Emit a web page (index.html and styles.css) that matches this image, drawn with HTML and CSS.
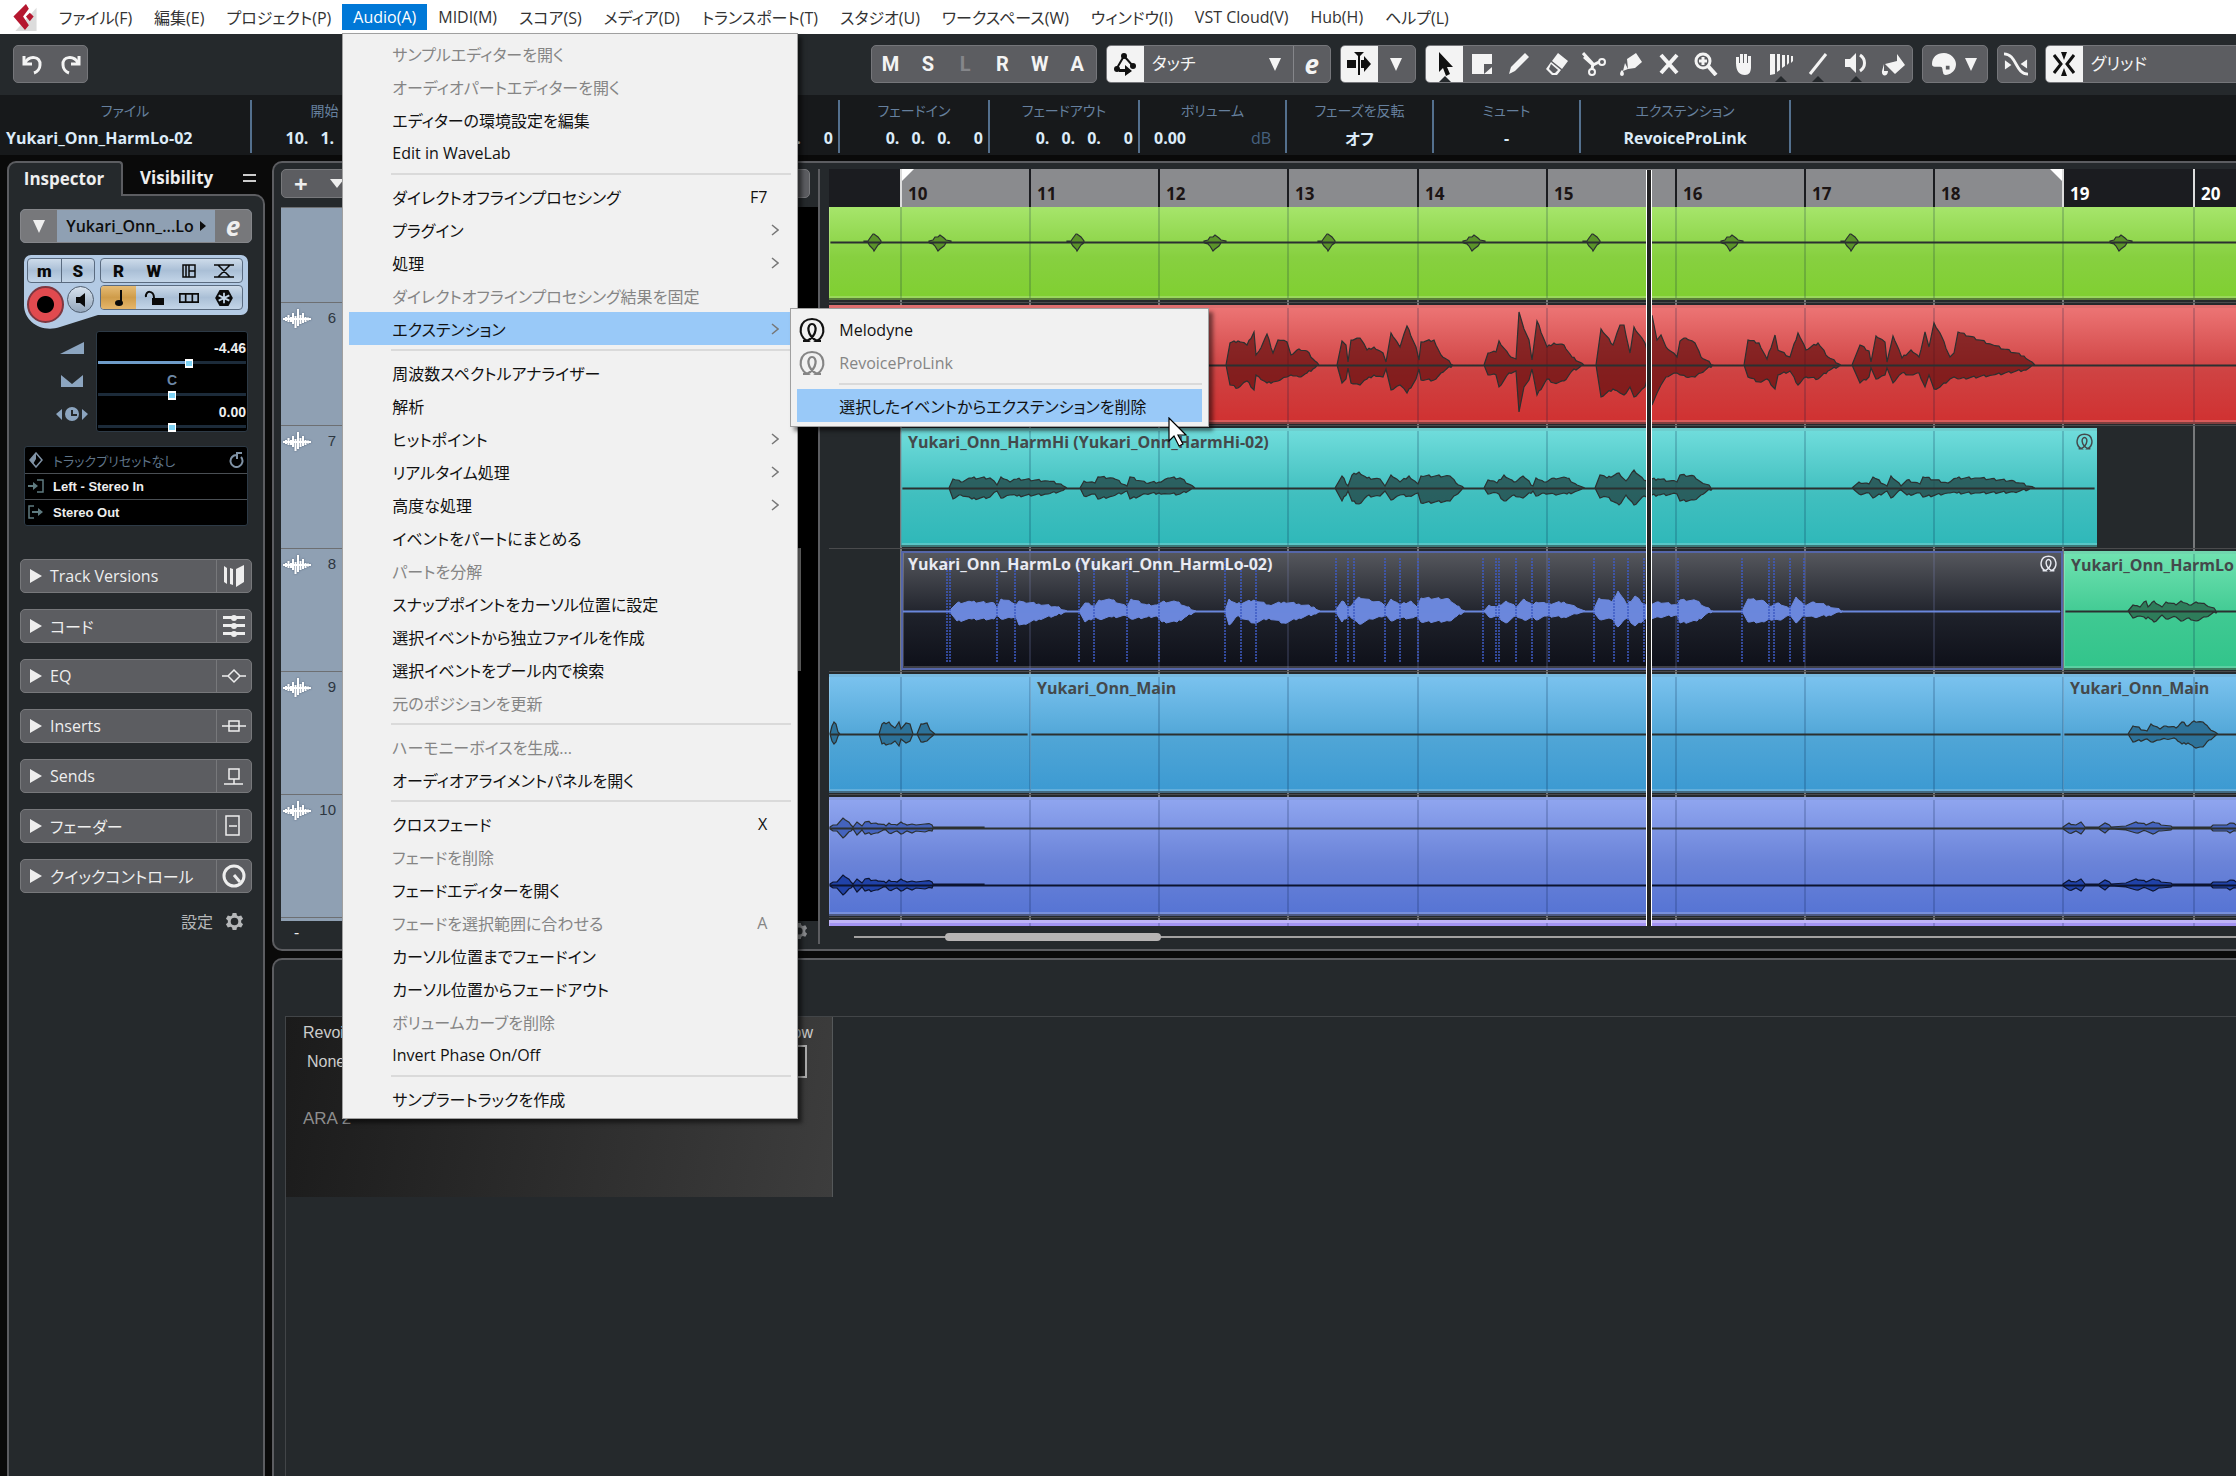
FILE: index.html
```html
<!DOCTYPE html>
<html lang="ja">

<head>
    <meta charset="UTF-8">
    <meta name="viewport" content="width=device-width, initial-scale=1.0">
    <title>Cubase - Yukari_Onn</title>
    <link rel="stylesheet" href="styles.css">
</head>

<body>
    <!-- Shared icons -->
    <svg class="sprite" aria-hidden="true">
        <symbol id="i-down" viewBox="0 0 12 16"><path d="M0 2h12L6 15z"/></symbol>
        <symbol id="i-right" viewBox="0 0 12 14"><path d="M0 0l12 7-12 7z"/></symbol>
        <symbol id="i-chevron" viewBox="0 0 8 12"><path d="M1 1l6 5-6 5" fill="none" stroke="currentColor" stroke-width="1.5"/></symbol>
        <symbol id="i-wave" viewBox="0 0 28 20"><path d="M0 10h28M3 8v4M5.500 6v7M8 8v5M10 4v11M12.500 7v12M15 0v17M17.500 6v9M20 4v10M22.500 8v5M25 8.500v3" fill="none" stroke="currentColor" stroke-width="2"/></symbol>
        <symbol id="i-ara" viewBox="0 0 26 26"><path d="M4 24h4C-2 18 0 2 13 2s15 16 5 22h4M8 24C19 18 18 7 13 7S7 18 18 24" fill="none" stroke="currentColor" stroke-width="2.2"/></symbol>
        <symbol id="i-gear" viewBox="0 0 20 20"><path fill-rule="evenodd" d="M8 1h4l.6 2.6 1.6.9L17 3.600l2 3.400-2 2v2l2 2-2 3.400-2.800-.9-1.600.9L12 19H8l-.6-2.600-1.600-.9L3 16.400 1 13l2-2V9L1 7l2-3.400 2.800.9 1.600-.9zM10 6a4 4 0 100 8 4 4 0 000-8z"/></symbol>
    </svg>

    <!-- Menu bar -->
    <nav class="menubar">
        <svg class="logo" viewBox="0 0 24 28"><path d="M24 4v24H2z" fill="#dcdcdc"/><path d="M13 0L0 13l12 14 4-5-6-9 6-8z" fill="#b5172f"/><path d="M17 9l4 4-4 5-4-5z" fill="#b5172f"/></svg>
        <button>ファイル(F)</button>
        <button>編集(E)</button>
        <button>プロジェクト(P)</button>
        <div class="menu-holder">
            <button class="open">Audio(A)</button>
            <ul class="menu audio-menu">
                <li><button disabled>サンプルエディターを開く</button></li>
                <li><button disabled>オーディオパートエディターを開く</button></li>
                <li><button>エディターの環境設定を編集</button></li>
                <li><button>Edit in WaveLab</button></li>
                <li class="sep"></li>
                <li><button>ダイレクトオフラインプロセシング<kbd>F7</kbd></button></li>
                <li><button>プラグイン<svg class="chev"><use href="#i-chevron"/></svg></button></li>
                <li><button>処理<svg class="chev"><use href="#i-chevron"/></svg></button></li>
                <li><button disabled>ダイレクトオフラインプロセシング結果を固定</button></li>
                <li>
                    <button class="active">エクステンション<svg class="chev"><use href="#i-chevron"/></svg></button>
                    <ul class="menu submenu">
                        <li><button><svg class="ara"><use href="#i-ara"/></svg>Melodyne</button></li>
                        <li><button disabled><svg class="ara"><use href="#i-ara"/></svg>RevoiceProLink</button></li>
                        <li class="sep"></li>
                        <li><button class="active">選択したイベントからエクステンションを削除</button></li>
                    </ul>
                    <svg class="cursor" viewBox="0 0 20 30"><path d="M1 1v23l5-5 5 10 4-2-5-9h8z" fill="#fff" stroke="#000" stroke-width="1.2"/></svg>
                </li>
                <li class="sep"></li>
                <li><button>周波数スペクトルアナライザー</button></li>
                <li><button>解析</button></li>
                <li><button>ヒットポイント<svg class="chev"><use href="#i-chevron"/></svg></button></li>
                <li><button>リアルタイム処理<svg class="chev"><use href="#i-chevron"/></svg></button></li>
                <li><button>高度な処理<svg class="chev"><use href="#i-chevron"/></svg></button></li>
                <li><button>イベントをパートにまとめる</button></li>
                <li><button disabled>パートを分解</button></li>
                <li><button>スナップポイントをカーソル位置に設定</button></li>
                <li><button>選択イベントから独立ファイルを作成</button></li>
                <li><button>選択イベントをプール内で検索</button></li>
                <li><button disabled>元のポジションを更新</button></li>
                <li class="sep"></li>
                <li><button disabled>ハーモニーボイスを生成...</button></li>
                <li><button>オーディオアライメントパネルを開く</button></li>
                <li class="sep"></li>
                <li><button>クロスフェード<kbd>X</kbd></button></li>
                <li><button disabled>フェードを削除</button></li>
                <li><button>フェードエディターを開く</button></li>
                <li><button disabled>フェードを選択範囲に合わせる<kbd>A</kbd></button></li>
                <li><button>カーソル位置までフェードイン</button></li>
                <li><button>カーソル位置からフェードアウト</button></li>
                <li><button disabled>ボリュームカーブを削除</button></li>
                <li><button>Invert Phase On/Off</button></li>
                <li class="sep"></li>
                <li><button>サンプラートラックを作成</button></li>
            </ul>
        </div>
        <button>MIDI(M)</button>
        <button>スコア(S)</button>
        <button>メディア(D)</button>
        <button>トランスポート(T)</button>
        <button>スタジオ(U)</button>
        <button>ワークスペース(W)</button>
        <button>ウィンドウ(I)</button>
        <button>VST Cloud(V)</button>
        <button>Hub(H)</button>
        <button>ヘルプ(L)</button>
    </nav>

    <!-- Toolbar -->
    <div class="toolbar">
        <div class="group undo">
            <button aria-label="Undo"><svg viewBox="0 0 24 24"><path d="M3 4v8h8" class="ln"/><path d="M4 11C8 3 20 4 19 13c0 4-3 7-6 8" class="ln"/></svg></button>
            <button aria-label="Redo"><svg viewBox="0 0 24 24"><path d="M21 4v8h-8" class="ln"/><path d="M20 11C16 3 4 4 5 13c0 4 3 7 6 8" class="ln"/></svg></button>
        </div>
        <div class="spacer"></div>
        <div class="group states">
            <button>M</button><button>S</button><button class="dim">L</button><button>R</button><button>W</button><button>A</button>
        </div>
        <div class="group">
            <button class="on" aria-label="Automation"><svg viewBox="0 0 24 24"><path d="M4 16L11 4l9 10" fill="none" stroke="#111" stroke-width="2"/><circle cx="11" cy="4" r="3"/><circle cx="4" cy="17" r="3"/><circle cx="20" cy="14" r="3"/><path d="M6 17h6v-4l7 6-7 5v-4H6z"/></svg></button>
            <label class="pick touch"><select aria-label="Automation mode"><option>タッチ</option></select><svg class="tri"><use href="#i-down"/></svg></label>
            <button class="edge e" aria-label="Automation panel">e</button>
        </div>
        <div class="group">
            <button class="on" aria-label="Auto-scroll"><svg viewBox="0 0 24 24"><path d="M7 0h10l-5 5zM11 3h2v20h-2zM0 8h9v8H0zM14 8h3V4l7 8-7 8v-4h-3z"/></svg></button>
            <button aria-label="Auto-scroll settings"><svg class="tri"><use href="#i-down"/></svg></button>
        </div>
        <div class="group tools">
            <button class="on notch" aria-label="Select"><svg viewBox="0 0 24 24"><path d="M6 0v20l4-4 3 8 4-2-3-7h6z"/></svg></button>
            <button aria-label="Range"><svg viewBox="0 0 24 24"><path d="M2 2h20v10h-8v10H2zM22 15v7h-8z"/></svg></button>
            <button aria-label="Draw"><svg viewBox="0 0 24 24"><path d="M2 22l2-7L18 1l4 4L8 19z"/></svg></button>
            <button aria-label="Erase"><svg viewBox="0 0 24 24"><path d="M13 1l10 8-6 8-10-8zM6 10l10 8-4 5H7l-6-6z"/><path d="M6 12l7 6-3 3H8l-4-4z" fill="#5c5d61"/></svg></button>
            <button aria-label="Split"><svg viewBox="0 0 24 24"><path d="M1 1l10 11M2 5l9 8 6-3M11 12l-1 5" class="ln"/><circle cx="20" cy="10" r="3" class="ln thin"/><circle cx="10" cy="20" r="3" class="ln thin"/></svg></button>
            <button aria-label="Glue"><svg viewBox="0 0 24 24"><path d="M8 7l9-6 6 9-7 6-7 1zM6 11l3 6-5 2zM3 18c3 3 2 6 0 6s-3-3 0-6z"/></svg></button>
            <button aria-label="Mute"><svg viewBox="0 0 24 24"><path d="M4 3l16 18M20 3L4 21" fill="none" stroke="currentColor" stroke-width="4"/></svg></button>
            <button aria-label="Zoom"><svg viewBox="0 0 24 24"><circle cx="9" cy="9" r="7" class="ln"/><path d="M9 5v8M5 9h8" class="ln"/><path d="M14 14l8 9" fill="none" stroke="currentColor" stroke-width="4"/></svg></button>
            <button aria-label="Comp"><svg viewBox="0 0 24 24"><path d="M4 11V5h3v6h1V2h3v9h1V2h3v9h1V4h3v11c0 5-2 8-6 8-6 0-9-4-9-12z"/></svg></button>
            <button class="notch" aria-label="Warp"><svg viewBox="0 0 24 24"><path d="M1 2h5v20l-5 1zM8 2h3v16l-3 2zM13 3h3v11l-3 2zM18 3h2v8l-2 2zM22 4h2v5l-2 2z"/></svg></button>
            <button class="notch" aria-label="Line"><svg viewBox="0 0 24 24"><path d="M4 22L20 2" fill="none" stroke="currentColor" stroke-width="3"/></svg></button>
            <button class="notch" aria-label="Play"><svg viewBox="0 0 24 24"><path d="M1 7h5l6-6v20l-6-6H1z"/><path d="M16 3c6 4 6 12 0 16" class="ln"/></svg></button>
            <button aria-label="Color"><svg viewBox="0 0 24 24"><path d="M4 12l12-3V2l8 11-10 9zM3 12v7h4c0 6-7 6-6 0z"/></svg></button>
        </div>
        <div class="group palette">
            <button aria-label="Color palette"><svg viewBox="0 0 26 26"><path fill-rule="evenodd" d="M13 1C5 1 0 6 0 13c0 2 1 3 3 3h6c3 0 2 4 3 6 0 2 1 3 3 3 7-1 11-6 11-12S20 1 13 1zM15 15h4v4h-4z"/></svg><svg class="tri"><use href="#i-down"/></svg></button>
        </div>
        <div class="group">
            <button aria-label="Snap to zero crossing"><svg viewBox="0 0 26 26"><path d="M0 2c14 0 12 22 26 22" class="ln"/><path d="M1 9v10l7-5zM25 8v10l-7-5z"/></svg></button>
        </div>
        <div class="group snap">
            <button class="on" aria-label="Snap"><svg viewBox="0 0 24 24"><path d="M9 0h6l-3 8zM9 24h6l-3-8z"/><path d="M2 3l7 9-7 9M22 3l-7 9 7 9" fill="none" stroke="#111" stroke-width="3"/></svg></button>
            <label class="pick"><select aria-label="Snap type"><option>グリッド</option></select></label>
        </div>
    </div>

    <!-- Info line -->
    <dl class="info">
        <div class="file"><dt>ファイル</dt><dd>Yukari_Onn_HarmLo-02</dd></div>
        <div class="pos"><dt>開始</dt><dd><i>10.</i><i>1.</i><i>1.</i><i>0</i></dd></div>
        <div class="pos"><dt>終了</dt><dd><i>19.</i><i>1.</i><i>1.</i><i>0</i></dd></div>
        <div class="pos"><dt>長さ</dt><dd><i>9.</i><i>0.</i><i>0.</i><i>0</i></dd></div>
        <div class="pos"><dt>オフセット</dt><dd><i>0.</i><i>0.</i><i>0.</i><i>0</i></dd></div>
        <div class="pos"><dt>フェードイン</dt><dd><i>0.</i><i>0.</i><i>0.</i><i>0</i></dd></div>
        <div class="pos"><dt>フェードアウト</dt><dd><i>0.</i><i>0.</i><i>0.</i><i>0</i></dd></div>
        <div class="vol"><dt>ボリューム</dt><dd>0.00<span>dB</span></dd></div>
        <div class="vol"><dt>フェーズを反転</dt><dd class="mid">オフ</dd></div>
        <div class="vol"><dt>ミュート</dt><dd class="mid">-</dd></div>
        <div class="ext"><dt>エクステンション</dt><dd class="mid">RevoiceProLink</dd></div>
    </dl>

    <div class="workspace">
        <!-- Inspector -->
        <aside class="inspector">
            <div class="tabs">
                <button class="tab current">Inspector</button>
                <button class="tab">Visibility</button>
                <button class="tab-menu" aria-label="Inspector settings"></button>
            </div>
            <div class="inspector-body">
                <div class="track-name">
                    <button aria-label="Collapse"><svg class="tri"><use href="#i-down"/></svg></button>
                    <span>Yukari_Onn_...Lo<svg viewBox="0 0 6 10"><path d="M0 0l6 5-6 5z"/></svg></span>
                    <button class="e" aria-label="Edit channel">e</button>
                </div>

                <div class="track-controls">
                    <svg class="backdrop" viewBox="0 0 224 75"><path d="M7 0h210a7 7 0 017 7v46a7 7 0 01-7 7H74L36 72C18 78 0 67 0 50V7a7 7 0 017-7z" fill="#b3cae4"/></svg>
                    <div class="left">
                        <div class="pill"><button>m</button><button>S</button></div>
                        <div class="round">
                            <button class="rec" aria-label="Record enable"></button>
                            <button class="mon" aria-label="Monitor"><svg viewBox="0 0 10 14"><path d="M0 4h4l5-4v14l-5-4H0z"/></svg></button>
                        </div>
                    </div>
                    <div class="right">
                        <div class="pill"><button>R</button><button>W</button>
                            <button aria-label="Lanes"><svg viewBox="0 0 16 16"><path d="M2 2h12v12H2zM8 2v12M8 8h6M5 2v12" class="ln line"/></svg></button>
                            <button aria-label="Crossfade"><svg viewBox="0 0 20 16"><path d="M0 2h4l12 12h4M20 2h-4L4 14H0M2 14h16M3 2h14" class="ln line"/></svg></button>
                        </div>
                        <div class="pill">
                            <button class="amber" aria-label="Musical mode"><svg viewBox="0 0 16 16"><path d="M9 0h2v13H9z"/><ellipse cx="8" cy="13" rx="4" ry="3"/></svg></button>
                            <button aria-label="Lock"><svg viewBox="0 0 20 16"><path d="M8 8h12v7H8z"/><path d="M2 7c-1-7 8-7 8 1" class="ln thin"/></svg></button>
                            <button aria-label="Lane display"><svg viewBox="0 0 24 16"><path d="M1 3h22v10H1zM8 3v10M16 3v10" class="ln thin"/></svg></button>
                            <button aria-label="Freeze"><svg viewBox="0 0 20 18"><path d="M5 0h10l5 9-5 9H5L0 9z"/><path d="M10 3v12M4 6l12 6M16 6L4 12" fill="none" stroke="#c4d6e8" stroke-width="2"/></svg></button>
                        </div>
                    </div>
                </div>

                <div class="levels">
                    <div class="level-icons">
                        <svg viewBox="0 0 24 14"><path d="M0 13L24 1v12z"/></svg>
                        <svg viewBox="0 0 24 14"><path d="M1 1l11 9 11-9v12H1z"/></svg>
                        <svg class="wide" viewBox="0 0 32 14"><path d="M6 2v11L0 7zM26 2v11l6-6z"/><circle cx="16" cy="7" r="7"/><path d="M16 3v5h5" fill="none" stroke="#25292c" stroke-width="2"/></svg>
                    </div>
                    <div class="level-box">
                        <label><span>-4.46</span><input class="filled" type="range" min="0" max="100" value="62"></label>
                        <label><span class="center">C</span><input type="range" min="0" max="100" value="50"></label>
                        <label><span>0.00</span><input type="range" min="0" max="100" value="50"></label>
                    </div>
                </div>

                <div class="routing">
                    <button class="preset"><svg viewBox="0 0 16 16"><path d="M8 1l6 7-6 7-6-7z" class="ln line"/><path d="M8 1v6l-3 5-3-4z"/></svg>トラックプリセットなし<svg class="reload" viewBox="0 0 16 16"><path d="M9 3a6 6 0 104 2M9 7V1h5" class="ln thin"/></svg></button>
                    <button><svg viewBox="0 0 16 16"><path d="M9 1h6v12H9" class="ln line"/><path d="M0 6h5V3l5 4-5 4V8H0z"/></svg>Left - Stereo In</button>
                    <button><svg viewBox="0 0 16 16"><path d="M6 1H1v12h5" class="ln line"/><path d="M4 6h6V3l5 4-5 4V8H4z"/></svg>Stereo Out</button>
                </div>

                <div class="sections">
                    <button><svg class="arrow"><use href="#i-right"/></svg>Track Versions<span><svg viewBox="0 0 24 24"><path d="M2 2l3 2v16l-3-2zM8 4l3 1v16l-3-1zM14 5l8-4v17l-8 5z"/></svg></span></button>
                    <button><svg class="arrow"><use href="#i-right"/></svg>コード<span><svg viewBox="0 0 24 24"><path d="M1 2h22v3H1zM1 10h22v3H1zM1 18h22v3H1z"/><circle cx="12" cy="4" r="3"/><circle cx="12" cy="12" r="3"/><circle cx="12" cy="20" r="3"/></svg></span></button>
                    <button><svg class="arrow"><use href="#i-right"/></svg>EQ<span><svg viewBox="0 0 24 24"><path d="M0 12h6l6-6 6 6h6M6 12l6 6 6-6" class="ln line"/></svg></span></button>
                    <button><svg class="arrow"><use href="#i-right"/></svg>Inserts<span><svg viewBox="0 0 24 24"><path d="M0 12h24M7 7h10v10H7z" class="ln line"/></svg></span></button>
                    <button><svg class="arrow"><use href="#i-right"/></svg>Sends<span><svg viewBox="0 0 24 24"><path d="M7 5h10v10H7zM12 15v5M2 20h19" class="ln line"/></svg></span></button>
                    <button><svg class="arrow"><use href="#i-right"/></svg>フェーダー<span><svg viewBox="0 0 24 24"><path d="M4 2h13v19H4zM7 12h8" class="ln line"/></svg></span></button>
                    <button><svg class="arrow"><use href="#i-right"/></svg>クイックコントロール<span><svg viewBox="0 0 24 24"><circle cx="12" cy="12" r="10" fill="none" stroke="currentColor" stroke-width="3"/><path d="M12 11l6 7" class="ln"/></svg></span></button>
                </div>
                <button class="setup">設定<svg><use href="#i-gear"/></svg></button>
            </div>
        </aside>

        <main>
            <!-- Project zone -->
            <section class="project">
                <div class="track-list">
                    <div class="list-tools"><button aria-label="Add track">+</button><button aria-label="Track presets"><svg class="small-tri" viewBox="0 0 14 9"><path d="M0 0h14L7 9z"/></svg></button></div>
                    <ul class="tracks">
                        <li class="cut"></li>
                        <li><svg><use href="#i-wave"/></svg><b>6</b></li>
                        <li><svg><use href="#i-wave"/></svg><b>7</b></li>
                        <li class="selected"><svg><use href="#i-wave"/></svg><b>8</b></li>
                        <li><svg><use href="#i-wave"/></svg><b>9</b></li>
                        <li><svg><use href="#i-wave"/></svg><b>10</b></li>
                        <li class="rest"></li>
                    </ul>
                    <div class="list-foot"><span>-</span><svg><use href="#i-gear"/></svg></div>
                </div>
                <div class="timeline">
                    <div class="ruler" id="ruler"></div>
                    <div class="lanes" id="lanes"></div>
                    <div class="playhead"></div>
                    <div class="scroll"><div class="thumb"></div></div>
                </div>
            </section>

            <!-- Lower zone -->
            <section class="lower">
                <div class="editor">
                    <div class="plugin">
                        <div class="row"><span>Revoice Pro</span><span>Show</span></div>
                        <div class="row none"><select aria-label="Process"><option>None</option></select><button aria-label="Show window"><svg class="tri"><use href="#i-down"/></svg></button></div>
                        <p>ARA 2</p>
                    </div>
                </div>
            </section>
        </main>
    </div>

    <script src="script.js"></script>
</body>

</html>
```

FILE: styles.css
```css
* {
    box-sizing: border-box;
}

body {
    margin: 0;
    min-height: 100vh;
    display: flex;
    flex-direction: column;
    overflow: hidden;
    background: #0a0a0a;
    color: #eee;
    font-family: "Open Sans", "Noto Sans CJK JP", sans-serif;
    font-size: 16px;
    font-feature-settings: "palt";
}

button,
select,
input {
    margin: 0;
    padding: 0;
    border: 0;
    background: none;
    color: inherit;
    font: inherit;
    font-feature-settings: inherit;
}

select {
    appearance: none;
}

ul,
dl,
dd,
p {
    margin: 0;
    padding: 0;
    list-style: none;
}

svg {
    display: block;
    fill: currentColor;
}

.sprite {
    position: absolute;
    width: 0;
    height: 0;
}

.ln {
    fill: none;
    stroke: currentColor;
    stroke-width: 3;
}

.thin {
    stroke-width: 2;
}

.line {
    stroke-width: 1.5;
}

.tri {
    width: 12px;
    height: 16px;
}

.e {
    font-size: 26px;
    font-style: italic;
    font-weight: 700;
    line-height: 32px;
}

/* Menu bar */
.menubar {
    height: 34px;
    display: flex;
    align-items: center;
    padding-left: 12px;
    background: #fff;
    color: #333;
    white-space: nowrap;
}

.logo {
    width: 26px;
    height: 27px;
    margin-right: 10px;
}

.menubar > button,
.menu-holder > button {
    height: 26px;
    padding: 0 11px;
}

.menu-holder {
    position: relative;
}

.menu-holder > button.open {
    background: #0078d7;
    color: #fff;
}

.menu {
    position: absolute;
    z-index: 10;
    padding: 4px 6px;
    background: #f1f1f1;
    border: 1px solid #a0a0a0;
    box-shadow: 4px 4px 4px rgba(0, 0, 0, 0.5);
    color: #111;
}

.audio-menu {
    top: 29px;
    left: 0;
    width: 456px;
    padding-top: 3px;
    padding-bottom: 3px;
}

.menu li {
    position: relative;
}

.menu li > button {
    display: flex;
    align-items: center;
    width: 100%;
    height: 33px;
    padding: 0 12px 0 43px;
    text-align: left;
}

.menu button:disabled {
    color: #858585;
}

.menu button.active {
    background: #99c9f8;
}

.menu .sep {
    height: 11px;
    margin-left: 42px;
    background: linear-gradient(#dadada, #dadada) 0 4px / 100% 2px no-repeat;
}

.submenu .sep {
    height: 10px;
}

.menu kbd {
    margin-left: auto;
    padding-right: 12px;
    font: inherit;
}

.chev {
    width: 8px;
    height: 12px;
    margin-left: auto;
    color: #777;
}

.submenu {
    top: -4px;
    left: 441px;
    width: 419px;
}

.submenu li > button {
    padding-left: 42px;
}

.ara {
    width: 26px;
    height: 26px;
    margin: 0 14px 0 -40px;
}

.cursor {
    position: absolute;
    z-index: 11;
    top: 105px;
    left: 819px;
    width: 20px;
    height: 30px;
}

/* Toolbar */
.toolbar {
    height: 61px;
    display: flex;
    align-items: center;
    gap: 9px;
    padding: 0 0 2px 13px;
    background: #25292c;
}

.group {
    display: flex;
    flex: none;
    height: 38px;
    overflow: hidden;
    background: #5c5d61;
    border: 1px solid #75767a;
    border-radius: 5px;
    color: #f4f4f4;
}

.group button {
    position: relative;
    display: flex;
    flex: none;
    align-items: center;
    justify-content: center;
    width: 37px;
}

.group button svg:not(.tri) {
    width: 24px;
    height: 24px;
}

.group .on {
    background: #f3f3f3;
    color: #111;
}

.group .edge {
    border-left: 1px solid #85868a;
}

.group .dim {
    color: #85868a;
}

.notch::after {
    content: "";
    position: absolute;
    bottom: 0;
    border: 6px solid transparent;
    border-top: 0;
    border-bottom-color: #25292c;
}

.spacer {
    width: 34%;
    flex: auto 0 0;
    margin-left: 9px;
}

.states {
    font-family: Roboto, sans-serif;
    font-size: 20px;
    font-weight: 700;
}

.group.states {
    width: 226px;
}

.states button {
    flex: 1;
}

.undo {
    width: 75px;
}

.pick {
    display: flex;
    align-items: center;
    font-size: 17px;
}

.pick select {
    padding-left: 8px;
}

.touch {
    width: 149px;
    justify-content: space-between;
    padding-right: 12px;
}

.touch select {
    flex: 1;
}

.tools {
    width: 488px;
}

.tools button {
    flex: 1;
}

.palette button {
    width: 64px;
    gap: 9px;
}

.snap {
    width: 220px;
}

/* Info line */
.info {
    height: 60px;
    display: flex;
    flex: none;
    background: #17191b;
    white-space: nowrap;
}

.info > div {
    flex: none;
    height: 53px;
    margin-top: 5px;
    border-right: 2px solid #54708e;
    text-align: center;
}

.info dt {
    height: 24px;
    color: #66809e;
    font-size: 14px;
    line-height: 22px;
}

.info dd {
    display: flex;
    align-items: center;
    height: 28px;
    color: #dcebf8;
    font-weight: 700;
}

.info .file {
    width: 252px;
}

.file dd {
    padding-left: 6px;
}

.info .pos {
    width: 147px;
}

.info .pos:nth-child(n+6) {
    width: 150px;
}

.pos dd {
    justify-content: flex-end;
    gap: 12px;
    padding-right: 5px;
}

.pos i {
    font-style: normal;
}

.pos i:last-child {
    padding-left: 11px;
}

.info .vol {
    width: 147px;
}

.vol dd {
    justify-content: space-between;
    padding: 0 14px;
}

.vol span {
    color: #46617f;
    font-weight: 400;
}

.info dd.mid {
    justify-content: center;
}

.info .ext {
    width: 210px;
}

/* Workspace */
.workspace {
    flex: 1;
    display: flex;
    gap: 7px;
    padding: 6px 0 0 7px;
}

.inspector {
    flex: none;
    width: 258px;
    display: flex;
    flex-direction: column;
}

.tabs {
    display: flex;
    align-items: center;
    height: 33px;
}

.tab {
    padding: 0 17px;
    font-size: 17px;
    font-weight: 700;
}

.tab.current {
    position: relative;
    align-self: stretch;
    width: 116px;
    padding: 0 2px 2px 0;
    margin-bottom: -2px;
    background: #25292c;
    border: 2px solid #5c5d61;
    border-bottom: 0;
    border-radius: 9px 4px 0 0;
}

.tab-menu {
    width: 13px;
    height: 8px;
    margin-left: auto;
    margin-right: 9px;
    border: solid #ccc;
    border-width: 2px 0;
}

.inspector-body {
    flex: 1;
    padding: 13px 11px 0;
    background: #25292c;
    border: 2px solid #5c5d61;
    border-bottom: 0;
    border-radius: 0 10px 0 0;
}

.track-name {
    display: flex;
    height: 34px;
    overflow: hidden;
    background: #8fa0b3;
    border: 1px solid #85868a;
    border-radius: 5px;
}

.track-name button {
    display: flex;
    align-items: center;
    justify-content: center;
    width: 36px;
    background: #77787b;
}

.track-name span {
    flex: 1;
    display: flex;
    align-items: center;
    justify-content: center;
    gap: 6px;
    color: #0d0d0d;
    font-weight: 600;
}

.track-name span svg {
    width: 6px;
    height: 10px;
}

.track-controls {
    position: relative;
    display: flex;
    justify-content: space-between;
    height: 76px;
    margin: 12px 4px 0;
    padding: 3px 5px 0 3px;
    color: #0a0a0a;
}

.backdrop {
    position: absolute;
    top: 0;
    left: 0;
    width: 224px;
    height: 75px;
}

.left,
.right {
    position: relative;
    width: 68px;
}

.right {
    width: 143px;
    display: flex;
    flex-direction: column;
    gap: 2px;
}

.pill {
    display: flex;
    height: 25px;
    overflow: hidden;
    background: linear-gradient(#cddbea, #aabfd6 50%, #c3d5e8);
    border: 1px solid #5a6b80;
    border-radius: 4px;
    font-family: Roboto, sans-serif;
    font-size: 17px;
    font-weight: 900;
}

.pill button {
    flex: 1;
    display: flex;
    align-items: center;
    justify-content: center;
}

.left .pill button + button {
    border-left: 1px solid #5a6b80;
}

.pill svg {
    width: 20px;
    height: 16px;
}

.amber {
    background: linear-gradient(#e5bb74, #cf9c4a 50%, #e6b66a);
}

.round {
    display: flex;
    gap: 3px;
    padding-top: 3px;
}

.rec {
    width: 37px;
    height: 37px;
    background: radial-gradient(circle, #000 8px, #e14a4f 9px);
    border: 2px solid #7d3740;
    border-radius: 50%;
}

.mon {
    display: flex;
    align-items: center;
    justify-content: center;
    width: 27px;
    height: 27px;
    background: linear-gradient(#d7e2ee, #94a7bc);
    border: 1px solid #4f5d6e;
    border-radius: 50%;
}

.mon svg {
    width: 10px;
    height: 14px;
}

.levels {
    display: flex;
    justify-content: flex-end;
    gap: 8px;
    margin-right: 4px;
}

.level-icons {
    display: flex;
    flex-direction: column;
    align-items: center;
    gap: 19px;
    padding-top: 10px;
    color: #8ca5c0;
}

.level-icons svg {
    width: 24px;
    height: 14px;
}

.level-icons .wide {
    width: 32px;
}

.level-box {
    width: 152px;
    height: 101px;
    padding: 7px 1px 0;
    background: #000;
    border: 1px solid #2d3a46;
    border-radius: 3px;
    font-family: "Liberation Sans", sans-serif;
    font-size: 14px;
    font-weight: 700;
}

.level-box label {
    display: flex;
    flex-direction: column;
    height: 32px;
    line-height: 19px;
    text-align: right;
}

.level-box .center {
    color: #6d87a5;
    text-align: center;
}

.level-box input {
    appearance: none;
    width: 100%;
    height: 10px;
    background: linear-gradient(#1c2b3a, #1c2b3a) 0 3px / 100% 3px no-repeat;
}

.level-box .filled {
    background: linear-gradient(90deg, #6f9cc9 62%, #1c2b3a 62%) 0 3px / 100% 3px no-repeat;
}

.level-box input::-webkit-slider-thumb {
    appearance: none;
    width: 8px;
    height: 9px;
    background: #7fd4f7;
    border: solid #fff;
    border-width: 2px 1px;
}

.routing {
    margin: 14px 4px 0;
    background: #000;
    border: 1px solid #2d3a46;
    border-radius: 3px;
    font-family: "Liberation Sans", "Noto Sans CJK JP", sans-serif;
    font-size: 13px;
    font-weight: 700;
}

.routing button {
    display: flex;
    align-items: center;
    gap: 9px;
    width: 100%;
    height: 26px;
    padding: 0 3px;
}

.routing button + button {
    border-top: 1px solid #4a4f54;
}

.routing svg {
    width: 16px;
    height: 16px;
    color: #5f7b80;
}

.routing .preset {
    color: #5f7488;
    font-weight: 400;
}

.routing .preset svg {
    color: #8093a6;
}

.routing .reload {
    margin-left: auto;
}

.sections {
    display: grid;
    gap: 16px;
    padding-top: 33px;
}

.sections button {
    display: flex;
    align-items: center;
    height: 34px;
    padding-left: 9px;
    background: #5c5d61;
    border: 1px solid #77787b;
    border-radius: 5px;
}

.arrow {
    width: 12px;
    height: 14px;
    margin-right: 8px;
}

.sections span {
    display: flex;
    align-items: center;
    justify-content: center;
    width: 35px;
    height: 100%;
    margin-left: auto;
    border-left: 1px solid #77787b;
}

.sections span svg {
    width: 24px;
    height: 24px;
}

.setup {
    display: flex;
    align-items: center;
    gap: 12px;
    margin: 16px 8px 0 auto;
    color: #b5b7b9;
}

.setup svg {
    width: 19px;
    height: 19px;
}

/* Project zone */
main {
    flex: 1;
    display: flex;
    flex-direction: column;
    gap: 7px;
    min-width: 0;
}

.project {
    display: flex;
    gap: 9px;
    padding: 6px 0 5px 7px;
    background: #25292c;
    border: 2px solid #5c5d61;
    border-right: 0;
    border-radius: 10px 0 0 10px;
}

.track-list {
    flex: none;
    width: 539px;
    height: 775px;
    border-right: 2px solid #5c5d61;
}

.list-tools {
    display: flex;
    align-items: center;
    width: 529px;
    height: 29px;
    margin-bottom: 9px;
    padding: 0 12px;
    gap: 22px;
    background: #5c5d61;
    border: 1px solid #77787b;
    border-radius: 5px;
    font-size: 24px;
    font-weight: 700;
    line-height: 24px;
}

.small-tri {
    width: 14px;
    height: 9px;
}

.tracks {
    background: #000;
    color: #2d3640;
}

.tracks li {
    display: flex;
    align-items: flex-start;
    width: 516px;
    height: 123px;
    padding: 6px 461px 0 2px;
    background: #8fa0b3;
    border-top: 1px solid #6d6f72;
}

.tracks svg {
    flex: none;
    width: 28px;
    height: 20px;
    color: #fff;
    filter: drop-shadow(0 0 1px #5a6b80);
}

.tracks b {
    flex: 1;
    font-family: "Liberation Sans", sans-serif;
    font-size: 15px;
    font-weight: 400;
    text-align: right;
}

.tracks .cut {
    height: 95px;
}

.tracks .selected {
    width: 520px;
    border-right: 4px solid #8e8e8e;
}

.tracks .rest {
    height: 4px;
    padding-top: 0;
}

.list-foot {
    display: flex;
    justify-content: space-between;
    padding: 0 10px 0 13px;
    line-height: 22px;
}

.list-foot svg {
    width: 18px;
    height: 20px;
    color: #8b8d90;
}

.timeline {
    position: relative;
    flex: 1;
    min-width: 0;
    overflow: hidden;
}

.ruler {
    position: relative;
    height: 38px;
    overflow: hidden;
    background: #1b1c20;
}

.cycle {
    position: absolute;
    top: 0;
    bottom: 0;
    background: #8a8b8e;
}

.cycle::before,
.cycle::after {
    content: "";
    position: absolute;
    top: 0;
    left: 0;
    border: solid transparent;
    border-width: 0 13px 13px 0;
    border-top: 13px solid #fff;
    border-bottom: 0;
}

.cycle::after {
    left: auto;
    right: 0;
    border-width: 13px 0 0 13px;
}

.tick {
    position: absolute;
    top: 0;
    bottom: 0;
    padding: 13px 0 0 6px;
    border-left: 2px solid #1b1c20;
    color: #1b1414;
    font-size: 17px;
    font-weight: 700;
    line-height: 24px;
}

.tick.edge,
.tick.out {
    border-color: #ddd;
}

.tick.out {
    color: #fff;
}

.lanes {
    height: 719px;
    overflow: hidden;
}

.lane {
    position: relative;
    height: 123px;
    border-top: 1px solid #4a4b4d;
}

.lane.cut {
    height: 95px;
    border-top: 0;
}

.lane > svg {
    position: absolute;
    width: 100%;
    height: 100%;
    color: #77797b;
}

.event {
    position: absolute;
    top: 2px;
    height: 119px;
    overflow: hidden;
    border-top: 3px solid rgba(255, 255, 255, 0.3);
    border-bottom: 2px solid rgba(0, 0, 0, 0.45);
    box-shadow: inset 1px -2px rgba(255, 255, 255, 0.2);
}

.cut .event {
    top: 0;
    height: 93px;
    border-top: 0;
}

.event > svg {
    position: absolute;
    top: -3px;
    left: 0;
    width: 100%;
    height: 119px;
    overflow: visible;
}

.cut .event > svg {
    top: 0;
}

.event span {
    position: relative;
    padding-left: 7px;
    color: #44494b;
    font-weight: 700;
    line-height: 22px;
    white-space: nowrap;
}

.event svg.badge {
    top: 2px;
    left: auto;
    right: 4px;
    width: 17px;
    height: 17px;
    color: #44494b;
}

.green { background: linear-gradient(#a6e56b, #87d040 55%, #80cf31); }
.red { background: linear-gradient(#ec7474, #cf4343 55%, #d03131); }
.cyan { background: linear-gradient(#6fdcdb, #41bfbf 55%, #2fb8b9); }
.mint { background: linear-gradient(#6fe2b0, #3fc992 55%, #32c48b); }
.blue { background: linear-gradient(#7ac2ee, #4fa5d6 55%, #3c9ad2); }
.indigo { background: linear-gradient(#8fa5ef, #6a83d8 55%, #5674d4); }
.violet { background: #a394f2; }

.dark {
    background: linear-gradient(#55575d, #1e212a 55%, #0e1019);
    border: 2px solid #5566a8;
}

.dark > svg {
    top: -2px;
    left: -2px;
}

.dark span {
    padding-left: 5px;
}

.dark span,
.event.dark .badge {
    color: #e8eaf2;
}

.grid {
    stroke: rgba(0, 20, 60, 0.18);
    stroke-width: 2;
}

.dark .grid {
    stroke: rgba(130, 140, 200, 0.2);
}

.slice {
    stroke: #3d5bc4;
    stroke-width: 2;
    stroke-dasharray: 2 1;
    stroke-opacity: 0.75;
}

.wave {
    stroke: #2b3030;
    stroke-width: 1.2;
    fill: rgba(36, 74, 74, 0.82);
}

.green .wave { fill: #5a9329; }
.red .wave { fill: rgba(90, 10, 10, 0.65); }
.mint .wave { fill: #2e7c5a; }
.blue .wave { fill: #2d7299; }
.indigo .wave { fill: #4463bd; }
.indigo .low { fill: #2042a8; stroke: #0c1430; }
.dark .wave { fill: #6b87dc; stroke: #6b87dc; stroke-width: 1; }

.playhead {
    position: absolute;
    top: 1px;
    left: 817px;
    width: 6px;
    height: 756px;
    background: #222;
    border: solid #fff;
    border-width: 0 1px;
}

.scroll {
    height: 18px;
    margin-left: 25px;
    padding: 7px 0 0 91px;
    background: linear-gradient(#a3a1a1, #a3a1a1) 0 10px / 100% 2px no-repeat;
}

.thumb {
    width: 216px;
    height: 8px;
    background: #b7b4b4;
    border-radius: 4px;
}

/* Lower zone */
.lower {
    flex: 1;
    display: flex;
    padding: 56px 0 0 11px;
    background: #25292c;
    border: 2px solid #5c5d61;
    border-right: 0;
    border-bottom: 0;
    border-radius: 10px 0 0 0;
}

.editor {
    flex: 1;
    border: solid #424548;
    border-width: 1px 0 0 1px;
}

.plugin {
    width: 547px;
    height: 180px;
    padding: 4px 19px 0 17px;
    background: linear-gradient(100deg, #1b1b1b, #3d3d3d);
    border-right: 1px solid #55585a;
    color: #ccc;
    font-family: "Liberation Sans", sans-serif;
}

.row {
    display: flex;
    justify-content: space-between;
    line-height: 24px;
}

.none {
    padding: 0 6px 0 4px;
}

.none button {
    display: flex;
    align-items: center;
    justify-content: center;
    width: 32px;
    height: 33px;
    border: 2px solid #aaa;
    background: #222;
}

.plugin p {
    padding-top: 31px;
    color: #8e8e8e;
    font-size: 17px;
}
```

FILE: script.js
```js
// Bar line positions in the timeline, bar 10 first
const bars = [72, 201, 330, 459, 589, 718, 847, 976, 1105, 1234, 1365];
const cycle = { from: 72, to: 1234 };

// Waveforms: "x up down" per point, one string per phrase
const harmHi = [
    "120 0 0,124 9 11,132 6 7,143 10 11,161 10 9,168 3 3,172 11 10,181 6 7,188 9 8,219 7 6,232 4 3,238 0 0",
    "251 0 0,255 7 8,266 5 6,269 11 11,284 10 8,298 2 3,301 11 11,317 5 6,330 6 5,339 10 6,351 10 6,366 0 0",
    "506 0 0,513 12 13,519 2 3,523 13 13,530 16 16,538 10 8,551 9 8,556 2 3,562 13 12,571 6 7,580 12 8,589 4 5,592 12 15,621 12 13,627 5 7,635 0 0",
    "655 0 0,659 8 6,668 5 5,675 13 13,685 6 7,694 12 10,704 2 3,707 10 8,715 6 5,725 10 6,738 10 6,748 3 3,756 0 0",
    "766 0 0,771 13 10,778 10 9,790 15 17,797 7 7,805 18 17,815 8 8,829 9 7,848 6 6,851 13 13,865 12 12,872 6 7,884 0 0",
    "1023 0 0,1030 6 6,1040 4 5,1044 11 10,1058 2 3,1062 12 10,1072 2 2,1078 8 7,1091 4 5,1094 11 9,1119 5 5,1128 10 5,1149 10 5,1185 7 4,1206 0 0"
];
const harmLo = [
    "120 0 0,128 8 10,143 9 8,165 8 8,168 3 4,172 12 8,182 9 7,187 6 6,190 10 14,195 9 13,210 7 8,228 4 4,238 0 0",
    "250 0 0,256 8 11,266 5 6,270 11 8,283 11 6,298 4 5,302 12 8,318 6 6,328 6 5,333 9 11,348 9 11,358 4 5,367 0 0",
    "396 0 0,400 12 14,408 7 5,425 11 12,440 6 7,455 9 12,470 7 7,485 4 3,491 0 0",
    "506 0 0,513 10 11,520 4 4,530 14 13,542 10 8,553 8 6,557 4 4,562 12 10,571 6 7,582 10 7,588 4 5,592 13 11,620 12 10,628 5 5,636 0 0",
    "655 0 0,660 6 6,668 4 5,677 10 12,687 4 5,695 12 9,704 6 6,707 9 9,718 7 5,735 9 6,748 3 3,756 0 0",
    "764 0 0,770 13 8,783 9 8,789 20 16,798 6 7,806 15 15,816 6 8,830 9 6,848 6 4,851 11 12,868 10 10,876 4 4,884 0 0",
    "913 0 0,919 12 11,935 10 11,940 5 8,950 8 9,961 2 4,967 14 12,975 6 4,985 9 6,1000 5 4,1014 0 0"
];
const lead = [
    "397 0 0,401 22 20,409 24 23,418 20 16,425 33 25,427 10 10,430 14 12,438 31 18,444 12 17,449 25 16,458 23 12,462 10 10,470 16 12,478 14 8,484 6 4,490 0 0",
    "508 0 0,513 24 18,517 20 14,519 3 3,522 25 18,531 27 20,538 15 14,545 18 10,554 12 12,557 3 4,562 32 25,571 18 20,578 39 28,587 18 14,590 5 4,592 23 15,605 25 15,612 10 8,624 0 0",
    "655 0 0,659 12 10,667 13 10,670 24 22,680 10 8,687 6 6,690 53 47,695 36 22,700 25 15,703 5 4,708 44 30,718 18 14,725 22 18,735 20 16,743 8 6,755 0 0",
    "767 0 0,772 36 32,784 20 24,791 40 28,795 40 30,801 12 22,805 38 32,816 22 22,820 8 8,823 50 40,828 25 28,832 30 20,837 18 12,848 8 8,851 24 10,857 27 12,866 22 12,872 8 8,884 0 0",
    "915 0 0,919 25 12,930 22 17,938 6 14,946 30 24,949 15 10,961 8 6,969 32 20,977 15 12,989 22 14,999 8 6,1012 0 0",
    "1023 0 0,1031 20 18,1040 14 12,1042 3 3,1047 29 14,1056 23 10,1058 3 3,1064 29 18,1073 7 8,1082 15 10,1090 8 8,1096 33 22,1100 18 10,1105 42 24,1111 32 22,1121 8 14,1125 12 12,1129 33 14,1164 20 10,1195 9 5,1206 0 0"
];
const mainIn = [
    "1 0 0,3 8 7,5 12 10,7 10 8,9 2 2,11 0 0",
    "50 0 0,53 10 10,60 12 10,66 6 7,70 12 12,72 5 5,77 11 9,81 10 7,84 0 0",
    "88 0 0,92 10 8,98 11 7,101 4 4,106 0 0"
];
const mainOut = ["1299 0 0,1304 8 8,1318 3 5,1322 10 8,1331 5 6,1337 8 5,1347 6 5,1353 12 10,1359 8 9,1365 13 13,1374 12 13,1380 6 6,1389 0 0"];
const harmLoOut = ["1299 0 0,1304 6 7,1311 4 5,1317 10 8,1319 4 6,1325 10 11,1333 4 4,1337 9 8,1347 6 6,1352 10 10,1360 6 7,1367 9 10,1377 6 6,1389 0 0"];
const stereo = [
    "1 1 1,4 3 3,8 3 3,14 10 10,22 3 3,24 1 1,28 6 7,33 2 2,36 6 6,47 5 5,57 2 2,60 5 5,68 3 3,72 6 6,78 3 3,83 4 5,87 3 3,96 4 4,103 3 3,104 1 1,155 1 1",
    "1234 1 1,1240 5 5,1247 3 3,1252 6 6,1256 1 1,1270 1 1,1276 5 5,1282 1 1,1297 2 2,1307 6 5,1317 3 3,1324 6 6,1332 3 3,1342 2 2,1343 1 1,1382 1 1,1384 3 3,1398 3 3,1401 5 5,1407 3 3,1440 2 2"
];
const clicks = [45, 110, 248, 385, 499, 644, 764, 902, 1022, 1291].map((x, i) =>
    i % 2
        ? `${x - 10} 1 1,${x - 6} 2 2,${x - 4} 5 4,${x - 1} 5 9,${x + 1} 7 7,${x + 5} 4 4,${x + 7} 2 1,${x + 12} 1 1`
        : `${x - 10} 1 1,${x - 6} 1 1,${x - 4} 4 4,${x - 1} 8 7,${x} 8 9,${x + 4} 5 3,${x + 7} 1 1`
);
const slices = [118, 121, 168, 186, 250, 265, 298, 330, 396, 412, 427, 507, 519, 525, 556, 571, 589, 654, 667, 670,
    687, 703, 720, 765, 785, 799, 815, 849, 913, 940, 945, 961, 975];

const lanes = [
    { cut: true, events: [{ color: "green", from: 0, waves: [[35, clicks]] }] },
    { events: [{ color: "red", from: 0, waves: [[60, lead]] }] },
    { events: [{ color: "cyan", from: 72, to: 1268, name: "Yukari_Onn_HarmHi (Yukari_Onn_HarmHi-02)", badge: true, waves: [[60, harmHi]] }] },
    { events: [
        { color: "dark", from: 72, to: 1234, name: "Yukari_Onn_HarmLo (Yukari_Onn_HarmLo-02)", badge: true, slices, waves: [[60, harmLo]] },
        { color: "mint", from: 1235, name: "Yukari_Onn_HarmLo", waves: [[60, harmLoOut]] }
    ] },
    { events: [
        { color: "blue", from: 0, to: 201, waves: [[60, mainIn]] },
        { color: "blue", from: 201, to: 1234, name: "Yukari_Onn_Main", waves: [[60, []]] },
        { color: "blue", from: 1234, name: "Yukari_Onn_Main", waves: [[60, mainOut]] }
    ] },
    { events: [{ color: "indigo", from: 0, waves: [[31, stereo], [88, stereo]] }] },
    { events: [{ color: "violet", from: 0, waves: [] }] }
];

// Closed outline of one phrase, roughened between its points
function outline(phrase, mid) {
    const points = phrase.split(",").map(p => p.split(" ").map(Number));
    const top = [];
    const bottom = [];
    points.forEach(([x, up, down], i) => {
        top.push(`${x} ${mid - up}`);
        bottom.unshift(`${x} ${mid + down}`);
        const next = points[i + 1];
        if (next && next[0] - x > 5 && up > 3) {
            for (let px = x + 2; px < next[0] - 1; px += 2) {
                const t = (px - x) / (next[0] - x);
                const rough = (px * 7 % 5) / 2 - 1;
                top.push(`${px} ${mid - up - (next[1] - up) * t + rough}`);
                bottom.unshift(`${px} ${mid + down + (next[2] - down) * t + rough}`);
            }
        }
    });
    return `M${top.concat(bottom).join("L")}Z`;
}

function drawEvent(event) {
    const grid = bars.map(x => `<path class="grid" d="M${x} 0V119"/>`).join("");
    const cuts = (event.slices || []).map(x => `<path class="slice" d="M${x} 7V112"/>`).join("");
    const waves = event.waves.map(([mid, phrases], i) =>
        `<path class="wave ${i ? "low" : ""}" d="M${event.from + 2} ${mid}H${(event.to || 2400) - 3}V${mid + 1}H${event.from + 2}Z${phrases.map(p => outline(p, mid)).join("")}"/>`
    ).join("");
    const end = event.to ? `width:${event.to - event.from}px` : "right:0";
    return `<div class="event ${event.color}" style="left:${event.from}px;${end}">
        <svg><g transform="translate(${-event.from} 0)">${grid}${waves}${cuts}</g></svg>
        ${event.name ? `<span>${event.name}</span>` : ""}
        ${event.badge ? `<svg class="badge" viewBox="0 0 26 26"><use href="#i-ara"/></svg>` : ""}
    </div>`;
}

document.getElementById("ruler").innerHTML =
    `<div class="cycle" style="left:${cycle.from}px;width:${cycle.to - cycle.from}px"></div>` +
    bars.map((x, i) => {
        const kind = x >= cycle.to ? "out" : x === cycle.from ? "edge" : "";
        return `<div class="tick ${kind}" style="left:${x - 1}px">${i + 10}</div>`;
    }).join("");

document.getElementById("lanes").innerHTML = lanes.map(lane =>
    `<div class="lane ${lane.cut ? "cut" : ""}">
        <svg>${bars.map(x => `<path d="M${x - 1} 0h2v123h-2z"/>`).join("")}</svg>
        ${lane.events.map(drawEvent).join("")}
    </div>`
).join("");
```
